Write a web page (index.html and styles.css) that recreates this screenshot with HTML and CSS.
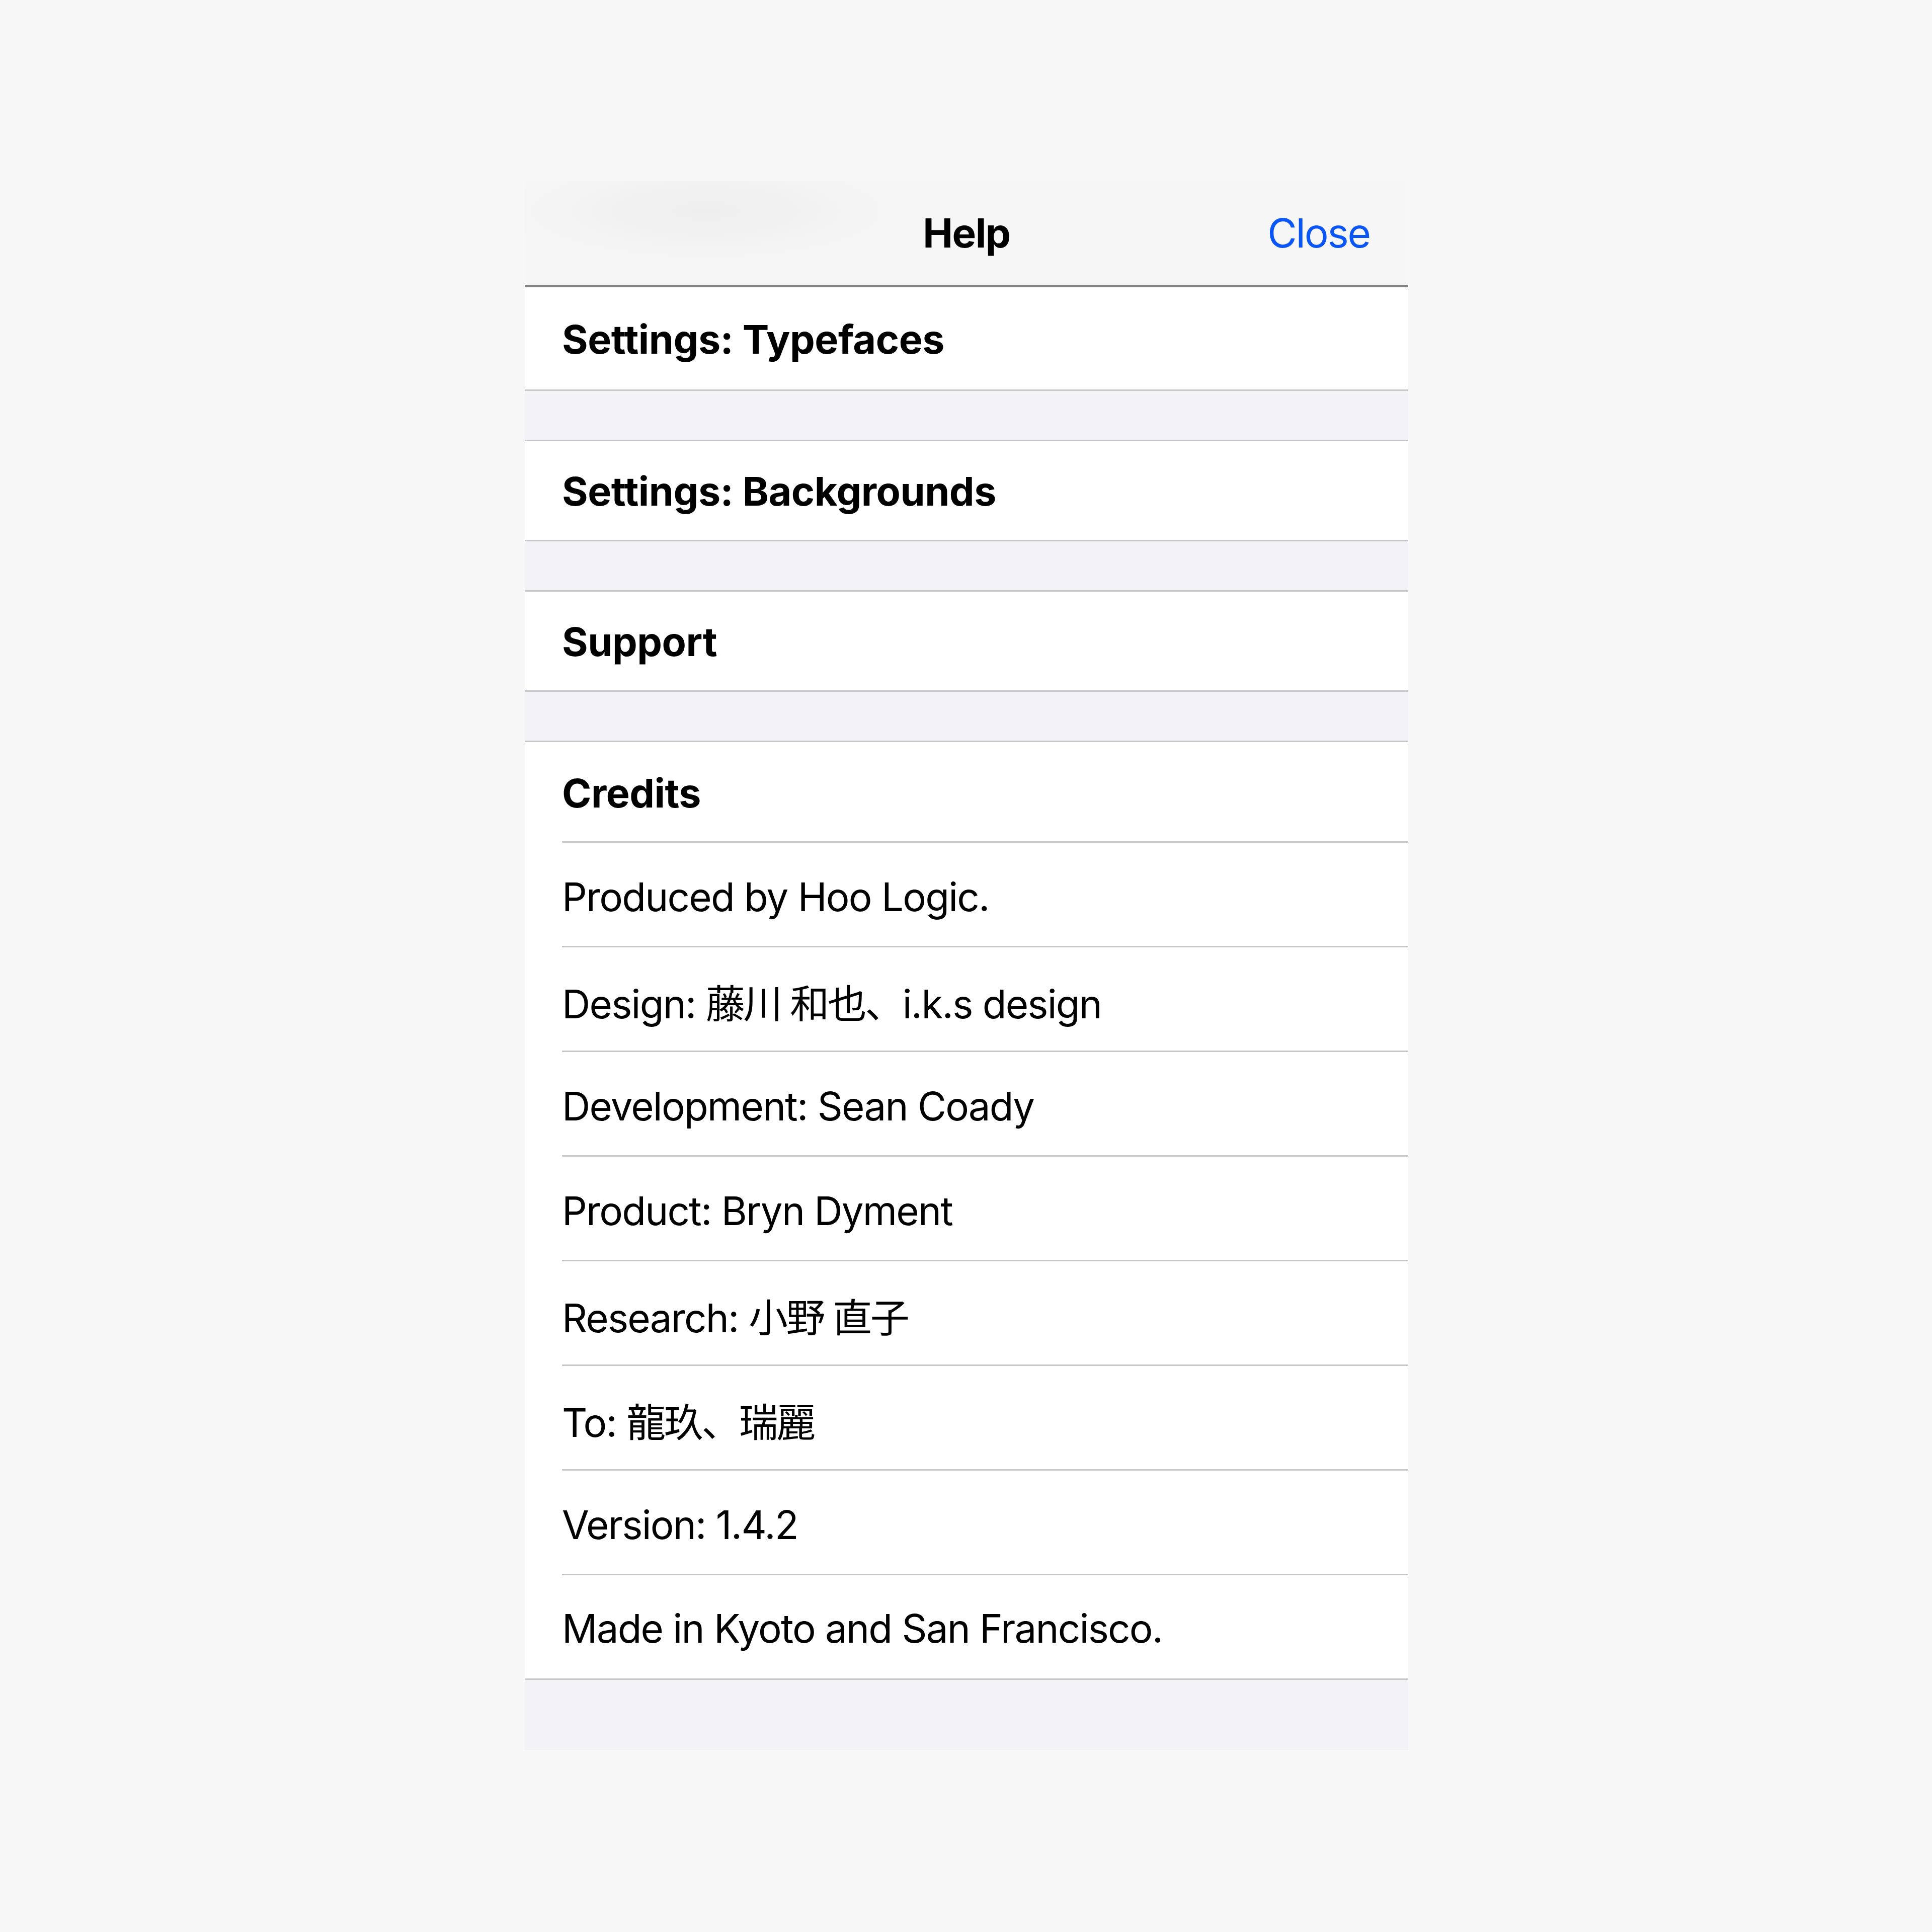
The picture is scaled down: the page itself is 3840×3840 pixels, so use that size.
FILE: index.html
```html
<!DOCTYPE html>
<html lang="en">
<head>
<meta charset="utf-8">
<title>Help</title>
<link rel="stylesheet" href="styles.css">
</head>
<body>
<div class="page">
  <div class="panel">
    <header class="navbar">
      <div class="nav-side"></div>
      <div class="nav-title">Help</div>
      <div class="nav-side nav-right"><span class="nav-btn">Close</span></div>
    </header>

    <section class="group first">
      <div class="row heading"><span>Settings: Typefaces</span></div>
    </section>
    <div class="gap"></div>

    <section class="group">
      <div class="row heading"><span>Settings: Backgrounds</span></div>
    </section>
    <div class="gap"></div>

    <section class="group">
      <div class="row heading"><span>Support</span></div>
    </section>
    <div class="gap"></div>

    <section class="group credits">
      <div class="row heading inset"><span>Credits</span></div>
      <div class="row inset"><span>Produced by Hoo Logic.</span></div>
      <div class="row inset"><span>Design: <span class="cjk">藤川 和也、</span>i.k.s design</span></div>
      <div class="row inset"><span>Development: Sean Coady</span></div>
      <div class="row inset"><span>Product: Bryn Dyment</span></div>
      <div class="row inset"><span>Research: <span class="cjk">小野 直子</span></span></div>
      <div class="row inset"><span>To: <span class="cjk">龍玖、瑞麗</span></span></div>
      <div class="row inset"><span>Version: 1.4.2</span></div>
      <div class="row last"><span>Made in Kyoto and San Francisco.</span></div>
    </section>
    <div class="tail"></div>
  </div>
</div>
</body>
</html>
```

FILE: styles.css
```css
* { box-sizing: border-box; }

html, body {
  margin: 0;
  padding: 0;
  background: #f7f7f7;
}

body {
  font-family: "Inter", "Noto Sans CJK JP", sans-serif;
  color: #000;
}

.page {
  width: 3840px;
  height: 3840px;
  display: flex;
  justify-content: center;
  padding-top: 360px;
}

.panel {
  width: 1756px;
  display: flex;
  flex-direction: column;
  margin-left: 2px;
}

.navbar {
  height: 211px;
  border-bottom: 5px solid #858585;
  display: grid;
  grid-template-columns: 1fr auto 1fr;
  align-items: center;
  background:
    radial-gradient(ellipse 420px 110px at 360px 60px, rgba(236,236,236,0.8), rgba(246,246,246,0) 100%),
    #f6f6f6;
}

.nav-title {
  font-size: 80px;
  font-weight: 700;
  letter-spacing: -1.5px;
  padding-bottom: 2px;
}

.nav-right {
  display: flex;
  justify-content: flex-end;
  padding-right: 76px;
}

.nav-btn {
  font-size: 80px;
  color: #0a55f6;
  letter-spacing: -2.2px;
  padding-bottom: 2px;
}

.group {
  background: #fff;
  border-top: 3px solid #c8c8cc;
  border-bottom: 3px solid #c8c8cc;
}

.group.first {
  border-top: none;
}

.row {
  height: 196px;
  display: flex;
  align-items: center;
  padding-left: 74px;
  font-size: 78px;
  letter-spacing: -1.8px;
  padding-top: 6px;
}

.group.first .row {
  height: 203px;
}

.row.heading {
  font-size: 79px;
  font-weight: 700;
  letter-spacing: -0.5px;
  padding-top: 2px;
}

.row.inset {
  height: 208px;
  background:
    linear-gradient(#c8c8cc, #c8c8cc) no-repeat 74px 100% / calc(100% - 74px) 3px,
    #fff;
}

.row.heading.inset {
  height: 200px;
}

.row.last {
  height: 205px;
}

.cjk {
  letter-spacing: -3.5px;
}

.gap {
  height: 97px;
  background: #f2f2f7;
}

.tail {
  height: 140px;
  background: #f2f2f7;
}
```
